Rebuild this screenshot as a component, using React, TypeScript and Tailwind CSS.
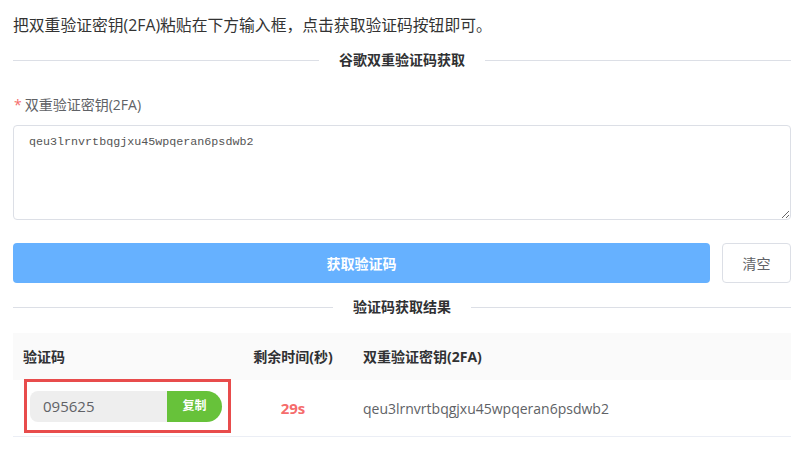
import React from "react";

const cjk = '"Open Sans", "Noto Sans CJK SC", sans-serif';

function Divider({ text }: { text: string }) {
  return (
    <div className="flex items-center h-[20px]">
      <div className="flex-1 h-px bg-[#dcdfe6]" />
      <div className="px-[20px] text-[14px] font-bold text-[#303133] leading-[20px]">{text}</div>
      <div className="flex-1 h-px bg-[#dcdfe6]" />
    </div>
  );
}

export default function App() {
  return (
    <div
      className="w-[805px] h-[449px] bg-white pl-[13px] pr-[14px] overflow-hidden"
      style={{ fontFamily: cjk }}
    >
      <p className="pt-[15px] text-[15.8px] leading-[20px] text-[#333333]">
        把双重验证密钥(2FA)粘贴在下方输入框，点击获取验证码按钮即可。
      </p>
      <div className="mt-[15px]">
        <Divider text="谷歌双重验证码获取" />
      </div>
      <div className="mt-[25px] flex items-center text-[14px] leading-[20px] text-[#606266]">
        <span className="text-[#f56c6c] mr-[3px] ml-[1px]">*</span>
        <span>双重验证密钥(2FA)</span>
      </div>
      <textarea
        className="mt-[10px] block w-full h-[95px] border border-[#dcdfe6] rounded-[4px] pl-[15px] pr-[15px] pt-[7px] text-[11.7px] leading-[18px] text-[#555555] outline-none"
        style={{ fontFamily: '"Liberation Mono", "Noto Sans CJK SC", monospace' }}
        defaultValue="qeu3lrnvrtbqgjxu45wpqeran6psdwb2"
      />
      <div className="mt-[23px] flex gap-[12px] h-[40px]">
        <div className="flex-1 rounded-[4px] bg-[#66b1ff] flex items-center justify-center text-white text-[14px] font-bold">
          获取验证码
        </div>
        <div className="w-[69px] rounded-[4px] border border-[#dcdfe6] flex items-center justify-center text-[14px] text-[#606266]">
          清空
        </div>
      </div>
      <div className="mt-[14px]">
        <Divider text="验证码获取结果" />
      </div>
      <div className="mt-[16px]">
        <div className="flex h-[47px] bg-[#fafafa] items-center text-[14px] font-bold text-[#303133]">
          <div className="w-[220px] px-[10px]">验证码</div>
          <div className="w-[120px] px-[10px] text-center">剩余时间(秒)</div>
          <div className="flex-1 px-[10px]">双重验证密钥(2FA)</div>
        </div>
        <div className="flex h-[57px] items-center border-b border-[#ebeef5] text-[14px] text-[#606266]">
          <div className="w-[220px] pl-[11px] self-stretch">
            <div className="w-[207px] h-[54px] -mt-[1px] border-[3px] border-[#e84c4c] flex items-center pl-[3px] pr-[6px]">
              <div className="flex h-[31px] w-full">
                <div className="flex-1 bg-[#eeeeee] rounded-l-[8px] flex items-center pl-[13px] text-[15px] text-[#606266]">
                  095625
                </div>
                <div className="w-[55px] bg-[#67c23a] rounded-r-full flex items-center justify-center text-white text-[12px] font-bold">
                  复制
                </div>
              </div>
            </div>
          </div>
          <div className="w-[120px] px-[10px] text-center text-[#f56c6c] font-bold text-[15px]">29s</div>
          <div className="flex-1 px-[10px]">qeu3lrnvrtbqgjxu45wpqeran6psdwb2</div>
        </div>
      </div>
    </div>
  );
}
